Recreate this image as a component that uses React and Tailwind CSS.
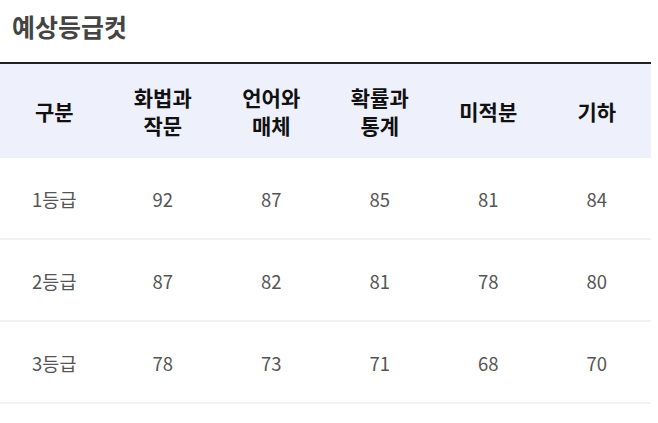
const heads = [['구분'], ['화법과', '작문'], ['언어와', '매체'], ['확률과', '통계'], ['미적분'], ['기하']];

const rows = [
  ['1등급', 92, 87, 85, 81, 84],
  ['2등급', 87, 82, 81, 78, 80],
  ['3등급', 78, 73, 71, 68, 70],
];

export default function App() {
  return (
    <div className="w-[658px] h-[423px] bg-white overflow-hidden font-['Noto_Sans_CJK_KR','Noto_Sans',sans-serif]">
      <h1 className="pl-[12px] pt-[9px] h-[62px] text-[25px] font-bold text-[#444] leading-[34px]">예상등급컷</h1>
      <div className="w-[651px] border-t-2 border-[#222]">
        <div className="grid grid-cols-6 h-[94px] bg-[#eef0fc] items-center">
          {heads.map((h, i) => (
            <div key={i} className="text-center text-[21px] font-bold text-[#111] leading-[28px]">
              {h.map((l) => <div key={l}>{l}</div>)}
            </div>
          ))}
        </div>
        {rows.map((r) => (
          <div key={r[0]} className="grid grid-cols-6 h-[82px] items-center border-b-2 border-[#f3f3f3]">
            {r.map((c, i) => (
              <div key={i} className="text-center text-[18.5px] text-[#555] leading-none pt-[2px]">{c}</div>
            ))}
          </div>
        ))}
      </div>
    </div>
  );
}
